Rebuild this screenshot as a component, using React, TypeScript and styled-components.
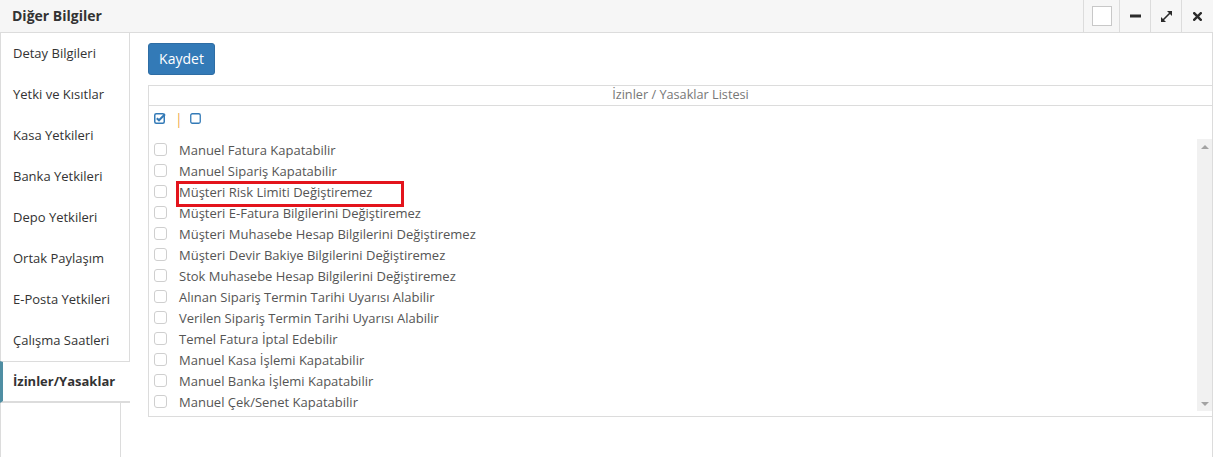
import styled, { createGlobalStyle } from "styled-components";
import React, { useState } from 'react';

const Global = createGlobalStyle`
    body{
        margin: 0;
        background: #fff;
        font-family: "Open Sans", "Liberation Sans", sans-serif;
        color: #333;
    }
`

const Dialog = styled.div`
    display: flex;
    flex-flow: column nowrap;
    width: 1213px;
    height: 457px;
    overflow: hidden;
`

const TitleBar = styled.div`
    display: flex;
    align-items: stretch;
    height: 32px;
    background: #f6f6f6;
    border-bottom: 1px solid #dcdcdc;

    h1{
        flex: 1;
        margin: 0;
        padding-left: 12px;
        font-size: 14px;
        font-weight: 700;
        line-height: 31px;
        color: #333;
    }
`

const TitleButton = styled.div<{ $w: number }>`
    display: flex;
    align-items: center;
    justify-content: center;
    width: ${p => p.$w}px;
    border-left: 1px solid #dcdcdc;
    color: #333;
`

const PinBox = styled.span`
    width: 18px;
    height: 18px;
    background: #fff;
    border: 1px solid #c8c8c8;
`

const Body = styled.div`
    flex: 1;
    display: flex;
    min-height: 0;
`

const Sidebar = styled.div`
    display: flex;
    flex-flow: column nowrap;
    width: 130px;
    flex: none;
`

const Tab = styled.div<{ $active?: boolean }>`
    display: flex;
    align-items: center;
    height: 41px;
    box-sizing: border-box;
    padding: 0 0 2px 12px;
    font-size: 13px;
    color: #333;
    border-left: 1px solid #dcdcdc;
    border-right: 1px solid #dcdcdc;

    ${p => p.$active && `
        height: 42px;
        padding: 0 0 1px 10px;
        font-weight: 700;
        border-left: 3px solid #4f8ea3;
        border-right: none;
        border-top: 1px solid #dcdcdc;
        border-bottom: 2px solid #dcdcdc;
    `}
`

const SidebarRest = styled.div`
    flex: 1;
    width: 121px;
    border-left: 1px solid #dcdcdc;
    border-right: 1px solid #dcdcdc;
    box-sizing: border-box;
`

const Content = styled.div`
    flex: 1;
    display: flex;
    flex-flow: column nowrap;
    align-items: flex-start;
    gap: 10px;
    padding: 10px 0 0 18px;
    border-right: 1px solid #dcdcdc;
`

const SaveButton = styled.button`
    width: 67px;
    height: 32px;
    border: 1px solid #2e6da4;
    border-radius: 3px;
    background: #337ab7;
    color: #fff;
    font-family: "Open Sans", "Liberation Sans", sans-serif;
    font-size: 14px;
    padding: 0 0 2px;
`

const Panel = styled.div`
    align-self: stretch;
    display: flex;
    flex-flow: column nowrap;
    border: 1px solid #dcdcdc;
    border-right: none;
    padding-bottom: 5px;
`

const PanelHead = styled.div`
    height: 19px;
    line-height: 17px;
    text-align: center;
    font-size: 12.7px;
    color: #777;
    border-bottom: 1px solid #dcdcdc;
`

const Toolbar = styled.div`
    display: flex;
    align-items: center;
    gap: 7px;
    height: 33px;
    box-sizing: border-box;
    padding: 0 0 8px 5px;
    color: #337ab7;

    i{
        font-style: normal;
        color: #f0ad4e;
        font-size: 14px;
        line-height: 11px;
        margin: 0 0 0 2px;
    }
`

const ListArea = styled.div`
    display: flex;
    height: 272px;
`

const List = styled.ul`
    flex: 1;
    margin: 0;
    padding: 0 0 0 5px;
    list-style: none;
    overflow: hidden;
`

const Row = styled.li<{ $marked?: boolean }>`
    position: relative;
    display: flex;
    align-items: center;
    gap: 12px;
    height: 21px;
    font-size: 13px;
    color: #555;

    ${p => p.$marked && `
        &::after{
            content: "";
            position: absolute;
            left: 22px;
            top: 0;
            width: 228px;
            height: 26px;
            box-sizing: border-box;
            border: 3px solid #e3141c;
        }
    `}
`

const Box = styled.input`
    appearance: none;
    width: 13px;
    height: 13px;
    margin: 0;
    border: 1px solid #cfcfcf;
    border-radius: 3px;
    background: #fff;
`

const ScrollTrack = styled.div`
    display: flex;
    flex-flow: column nowrap;
    justify-content: space-between;
    align-items: center;
    width: 15px;
    padding: 6px 0 5px;
    box-sizing: border-box;
    background: #f1f1f1;
`

const Arrow = styled.span<{ $down?: boolean }>`
    width: 0;
    height: 0;
    border-left: 4px solid transparent;
    border-right: 4px solid transparent;
    ${p => p.$down ? "border-top: 4px solid #a3a3a3;" : "border-bottom: 4px solid #a3a3a3;"}
`

const tabs = [
    "Detay Bilgileri",
    "Yetki ve Kısıtlar",
    "Kasa Yetkileri",
    "Banka Yetkileri",
    "Depo Yetkileri",
    "Ortak Paylaşım",
    "E-Posta Yetkileri",
    "Çalışma Saatleri",
    "İzinler/Yasaklar",
]

const permissions = [
    "Manuel Fatura Kapatabilir",
    "Manuel Sipariş Kapatabilir",
    "Müşteri Risk Limiti Değiştiremez",
    "Müşteri E-Fatura Bilgilerini Değiştiremez",
    "Müşteri Muhasebe Hesap Bilgilerini Değiştiremez",
    "Müşteri Devir Bakiye Bilgilerini Değiştiremez",
    "Stok Muhasebe Hesap Bilgilerini Değiştiremez",
    "Alınan Sipariş Termin Tarihi Uyarısı Alabilir",
    "Verilen Sipariş Termin Tarihi Uyarısı Alabilir",
    "Temel Fatura İptal Edebilir",
    "Manuel Kasa İşlemi Kapatabilir",
    "Manuel Banka İşlemi Kapatabilir",
    "Manuel Çek/Senet Kapatabilir",
]

function App(){
    const [checked, setChecked] = useState<boolean[]>(permissions.map(() => false));
    const active = 8;

    return(
        <Dialog>
            <Global />
            <TitleBar>
                <h1>Diğer Bilgiler</h1>
                <TitleButton $w={35}><PinBox /></TitleButton>
                <TitleButton $w={30}>
                    <svg width="11" height="4" viewBox="0 0 11 4"><rect x="0" y="0.5" width="11" height="3" fill="#2b2b2b" /></svg>
                </TitleButton>
                <TitleButton $w={30}>
                    <svg width="13" height="13" viewBox="0 0 13 13" fill="none" stroke="#2b2b2b" strokeWidth="1.6">
                        <path d="M3 10 L10 3" />
                        <path d="M7 1 L12 1 L12 6 Z" fill="#2b2b2b" strokeWidth="0" />
                        <path d="M1 7 L1 12 L6 12 Z" fill="#2b2b2b" strokeWidth="0" />
                    </svg>
                </TitleButton>
                <TitleButton $w={31}>
                    <svg width="9" height="9" viewBox="0 0 9 9" stroke="#2b2b2b" strokeWidth="2.4" strokeLinecap="square">
                        <path d="M1.2 1.2 L7.8 7.8 M7.8 1.2 L1.2 7.8" />
                    </svg>
                </TitleButton>
            </TitleBar>
            <Body>
                <Sidebar>
                    {tabs.map((t, i) => (
                        <Tab key={t} $active={i === active}>{t}</Tab>
                    ))}
                    <SidebarRest />
                </Sidebar>
                <Content>
                    <SaveButton>Kaydet</SaveButton>
                    <Panel>
                        <PanelHead>İzinler / Yasaklar Listesi</PanelHead>
                        <Toolbar>
                            <svg width="12" height="11" viewBox="0 0 12 11" fill="none">
                                <rect x="0.75" y="0.75" width="9.5" height="9.5" rx="1.5" stroke="#337ab7" strokeWidth="1.5" />
                                <path d="M2.8 5.2 L5 7.3 L11 1.2" stroke="#337ab7" strokeWidth="2" />
                            </svg>
                            <i>|</i>
                            <svg width="11" height="11" viewBox="0 0 11 11" fill="none">
                                <rect x="0.75" y="0.75" width="9.5" height="9.5" rx="1.5" stroke="#337ab7" strokeWidth="1.3" />
                            </svg>
                        </Toolbar>
                        <ListArea>
                            <List>
                                {permissions.map((p, i) => (
                                    <Row key={p} $marked={i === 2}>
                                        <Box type="checkbox" checked={checked[i]} onChange={() => {
                                            const next = [...checked];
                                            next[i] = !next[i];
                                            setChecked(next);
                                        }} />
                                        {p}
                                    </Row>
                                ))}
                            </List>
                            <ScrollTrack>
                                <Arrow />
                                <Arrow $down />
                            </ScrollTrack>
                        </ListArea>
                    </Panel>
                </Content>
            </Body>
        </Dialog>
    )
}

export default App
